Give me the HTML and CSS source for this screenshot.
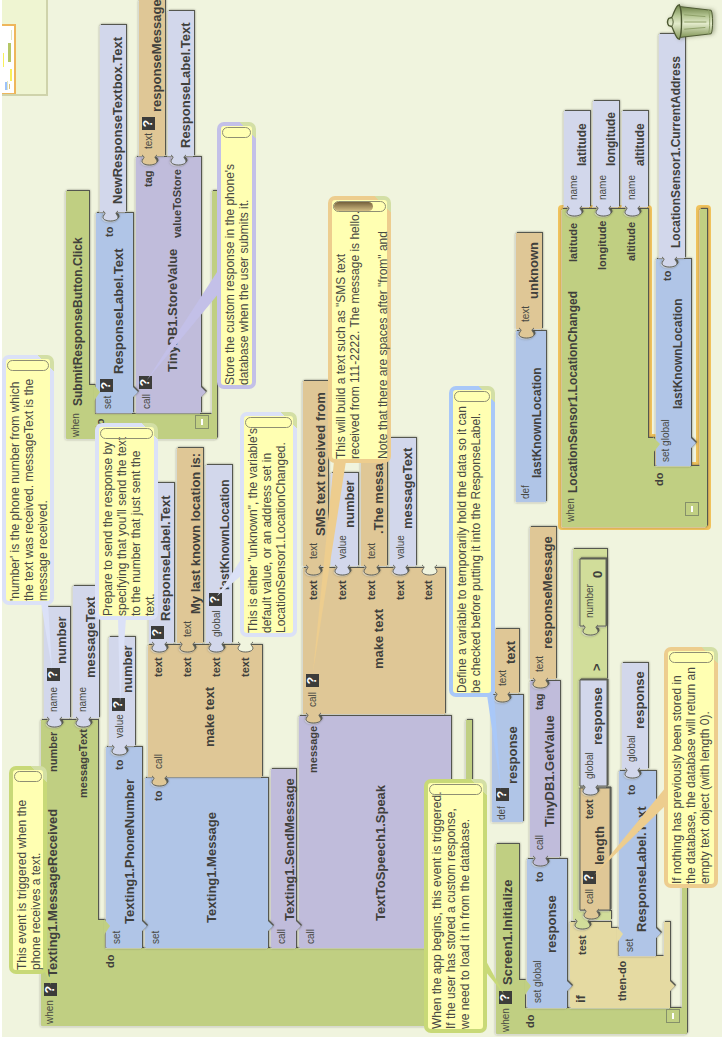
FILE: index.html
```html
<!DOCTYPE html>
<html lang="en">
<head>
<meta charset="utf-8">
<title>Blocks editor</title>
<link rel="stylesheet" href="styles.css">
</head>
<body>
<main class="workspace">
  <svg class="blocks" width="1037" height="722" viewBox="0 0 1037 722">
    <defs>
      <path id="plug" class="plug" d="M1 4C-1 7-2 6-3 5C-7 2-9 7-9 11.500S-7 21-3 18C-2 17-1 16 1 19"/>
    </defs>

    <!-- SubmitResponseButton.Click -->
    <g class="shape event"><path d="M599 66H846V89H652V95H650L645 99L640 95H623V212H846V217H599L598 216V67Z"/></g>
    <g class="shape proc"><path d="M625 136H880V201H650L645 206L640 201H624V137Z"/></g>
    <g class="shape var"><path d="M625 96H824V133H650L645 138L640 133H624V97Z"/></g>
    <path class="event" d="M636 94H652L645 100Z"/>
    <g class="shape value"><path d="M825 100H1012V126H825Z"/><use href="#plug" x="825" y="99"/></g>
    <g class="shape string"><path d="M881 139H1037V165H881Z"/><use href="#plug" x="881" y="138"/></g>
    <g class="shape value"><path d="M881 168H1026V194H881Z"/><use href="#plug" x="881" y="167"/></g>
    <text class="kind" x="600" y="79">when</text><text class="name compact" x="631" y="82">SubmitResponseButton.Click</text>
    <text class="slot" x="605" y="104">do</text>
    <text class="kind" x="628" y="111">set</text><text class="name" x="663" y="123">ResponseLabel.Text</text><text class="slot" x="800" y="113">to</text>
    <text class="name" x="833" y="122">NewResponseTextbox.Text</text>
    <text class="kind" x="628" y="150">call</text><text class="name" x="665" y="177">TinyDB1.StoreValue</text>
    <text class="slot" x="850" y="152">tag</text><text class="slot" x="799" y="181">valueToStore</text>
    <text class="kind" x="888" y="152">text</text><text class="name" x="925" y="161">responseMessage</text>
    <text class="name" x="889" y="190">ResponseLabel.Text</text>

    <!-- Texting1.MessageReceived -->
    <g class="shape event"><path d="M12 41H317V98H117V105H89V466H317V472H12L11 471V42Z"/></g>
    <g class="shape proc"><path d="M90 299H321V451H89V300Z"/></g>
    <g class="shape proc"><path d="M90 271H268V296H116L111 301L106 296H89V272Z"/></g>
    <g class="shape var"><path d="M90 145H259V268H116L111 273L106 268H89V146Z"/></g>
    <g class="shape var"><path d="M90 106H290V142H116L111 147L106 142H89V107Z"/></g>
    <path class="event" d="M102 104H118L111 110Z"/>
    <g class="shape value"><path d="M319 44H430V70H319Z"/><use href="#plug" x="319" y="43"/></g>
    <g class="shape value"><path d="M319 73H451V99H319Z"/><use href="#plug" x="319" y="72"/></g>
    <g class="shape value"><path d="M291 109H400V135H291Z"/><use href="#plug" x="291" y="108"/></g>
    <g class="shape string"><path d="M260 148H392V262H260Z"/><use href="#plug" x="260" y="148"/></g>
    <g class="shape value"><path d="M394 149H554V174H394Z"/><use href="#plug" x="394" y="148"/></g>
    <g class="shape string"><path d="M394 177H589V203H394Z"/><use href="#plug" x="394" y="176"/></g>
    <g class="shape value"><path d="M394 206H572V232H394Z"/><use href="#plug" x="394" y="205"/></g>
    <g class="canvas"><use href="#plug" x="394" y="234"/></g>
    <g class="shape string"><path d="M323 303H469V445H323Z"/><use href="#plug" x="323" y="302"/></g>
    <g class="shape string"><path d="M471 303H656V328H471Z"/><use href="#plug" x="471" y="302"/></g>
    <g class="shape value"><path d="M471 331H564V358H471Z"/><use href="#plug" x="471" y="331"/></g>
    <g class="shape string"><path d="M471 361H620V387H471Z"/><use href="#plug" x="471" y="360"/></g>
    <g class="shape value"><path d="M471 390H599V416H471Z"/><use href="#plug" x="471" y="389"/></g>
    <g class="canvas"><use href="#plug" x="471" y="418"/></g>
    <text class="kind" x="13" y="53">when</text><text class="name" x="60" y="57">Texting1.MessageReceived</text>
    <text class="slot" x="265" y="57">number</text><text class="slot" x="239" y="87">messageText</text><text class="slot" x="69" y="114">do</text>
    <text class="kind" x="325" y="57">name</text><text class="name" x="373" y="66">number</text>
    <text class="kind" x="325" y="86">name</text><text class="name" x="359" y="95">messageText</text>
    <text class="kind" x="93" y="120">set</text><text class="name" x="113" y="134">Texting1.PhoneNumber</text><text class="slot" x="267" y="123">to</text>
    <text class="kind" x="299" y="123">value</text><text class="name" x="344" y="132">number</text>
    <text class="kind" x="93" y="159">set</text><text class="name" x="114" y="216">Texting1.Message</text><text class="slot" x="236" y="162">to</text>
    <text class="kind" x="268" y="162">call</text><text class="name" x="290" y="214">make text</text>
    <text class="slot" x="360" y="162">text</text><text class="slot" x="360" y="191">text</text><text class="slot" x="360" y="220">text</text><text class="slot" x="360" y="249">text</text>
    <text class="name" x="416" y="170">ResponseLabel.Text</text>
    <text class="kind" x="400" y="191">text</text><text class="name" x="423" y="200">My last known location is:</text>
    <text class="kind" x="400" y="220">global</text><text class="name compact" x="447" y="229">lastKnownLocation</text>
    <text class="kind" x="93" y="285">call</text><text class="name" x="116" y="294">Texting1.SendMessage</text>
    <text class="kind" x="93" y="314">call</text><text class="name" x="116" y="385">TextToSpeech1.Speak</text><text class="slot" x="264" y="317">message</text>
    <text class="kind" x="330" y="316">call</text><text class="name" x="368" y="383">make text</text>
    <text class="slot" x="437" y="317">text</text><text class="slot" x="437" y="346">text</text><text class="slot" x="437" y="375">text</text><text class="slot" x="437" y="404">text</text><text class="slot" x="437" y="432">text</text>
    <text class="kind" x="478" y="317">text</text><text class="name" x="501" y="325">SMS text received from</text>
    <text class="kind" x="478" y="346">value</text><text class="name" x="509" y="354">number</text>
    <text class="kind" x="478" y="375">text</text><text class="name" x="503" y="383">.The message is</text>
    <text class="kind" x="478" y="404">value</text><text class="name" x="508" y="412">messageText</text>

    <!-- variable definitions -->
    <g class="shape var"><path d="M215 492H342V523H215Z"/></g>
    <g class="shape string"><path d="M344 495H408V519H344Z"/><use href="#plug" x="344" y="491"/></g>
    <text class="kind" x="217" y="505">def</text><text class="name" x="253" y="517">response</text>
    <text class="kind" x="351" y="506">text</text><text class="name" x="373" y="515">text</text>
    <g class="shape var"><path d="M535 516H706V546H535Z"/></g>
    <g class="shape string"><path d="M708 516H804V542H708Z"/><use href="#plug" x="708" y="515"/></g>
    <text class="kind" x="538" y="529">def</text><text class="name compact" x="559" y="541">lastKnownLocation</text>
    <text class="kind" x="715" y="529">text</text><text class="name" x="738" y="538">unknown</text>

    <!-- Screen1.Initialize -->
    <g class="shape event"><path d="M4 496H193V519H57V525H29V682H193V687H4L3 686V497Z"/></g>
    <g class="shape test"><path d="M30 570H115V611H109V618H81V664H115V670H56L51 675L46 670H29V571Z"/></g>
    <g class="shape var"><path d="M30 527H178V567H56L51 572L46 567H29V528Z"/></g>
    <path class="event" d="M42 525H58L51 531Z"/>
    <g class="shape proc"><path d="M180 530H356V560H180Z"/><use href="#plug" x="180" y="529"/></g>
    <g class="shape string"><path d="M358 530H510V556H358Z"/><use href="#plug" x="358" y="529"/></g>
    <g class="shape logic"><path d="M117 573H488V607H358V580H126V611H117Z"/><use href="#plug" x="117" y="571"/></g>
    <g class="shape string"><path class="inset" d="M127 580H249V610H127Z"/><use href="#plug" x="127" y="580"/></g>
    <g class="shape value"><path class="inset" d="M251 580H357V607H251Z"/><use href="#plug" x="251" y="579"/></g>
    <g class="shape logic"><path class="inset" d="M411 580H478V606H411Z"/><use href="#plug" x="411" y="579"/></g>
    <g class="shape var"><path d="M82 619H266V656H109L104 661L99 656H81V620Z"/></g>
    <path class="test" d="M94 617H110L103 623Z"/>
    <g class="shape value"><path d="M268 622H374V648H268Z"/><use href="#plug" x="268" y="621"/></g>
    <text class="kind" x="5" y="509">when</text><text class="name" x="52" y="512">Screen1.Initialize</text><text class="slot" x="9" y="534">do</text>
    <text class="kind" x="34" y="541">set global</text><text class="name" x="84" y="556">response</text><text class="slot" x="155" y="543">to</text>
    <text class="kind" x="187" y="543">call</text><text class="name" x="210" y="554">TinyDB1.GetValue</text><text class="slot" x="327" y="543">tag</text>
    <text class="kind" x="365" y="543">text</text><text class="name" x="388" y="552">responseMessage</text>
    <text class="name" x="34" y="585">if</text><text class="slot" x="82" y="586">test</text><text class="slot" x="36" y="626">then-do</text>
    <text class="kind" x="133" y="593">call</text><text class="name" x="172" y="604">length</text><text class="slot" x="218" y="593">text</text>
    <text class="kind" x="258" y="593">global</text><text class="name" x="292" y="602">response</text>
    <text class="name" x="366" y="601">&gt;</text><text class="kind" x="419" y="593">number</text><text class="name" x="459" y="602">0</text>
    <text class="kind" x="85" y="633">set</text><text class="name" x="105" y="646">ResponseLabel.Text</text><text class="slot" x="242" y="635">to</text>
    <text class="kind" x="275" y="635">global</text><text class="name" x="308" y="644">response</text>

    <!-- LocationSensor1.LocationChanged, selected -->
    <path class="halo" d="M511 562H828V648H599V654H571V700H828V707H511Z"/>
    <g class="shape event"><path d="M511 562H828V648H599V654H571V700H828V707H511L510 706V563Z"/></g>
    <g class="shape var"><path d="M572 656H778V691H599L594 696L589 691H571V657Z"/></g>
    <path class="event" d="M584 653H600L593 660Z"/>
    <g class="shape value"><path d="M830 564H926V590H830Z"/><use href="#plug" x="830" y="563"/></g>
    <g class="shape value"><path d="M830 593H936V619H830Z"/><use href="#plug" x="830" y="592"/></g>
    <g class="shape value"><path d="M830 622H926V648H830Z"/><use href="#plug" x="830" y="621"/></g>
    <g class="shape value"><path d="M779 659H1003V685H779Z"/><use href="#plug" x="779" y="658"/></g>
    <text class="kind" x="515" y="574">when</text><text class="name compact" x="544" y="577">LocationSensor1.LocationChanged</text>
    <text class="slot" x="775" y="577">latitude</text><text class="slot" x="767" y="606">longitude</text><text class="slot" x="776" y="635">altitude</text>
    <text class="slot" x="551" y="663">do</text><text class="kind" x="575" y="669">set global</text><text class="name compact" x="628" y="682">lastKnownLocation</text><text class="slot" x="756" y="671">to</text>
    <text class="kind" x="837" y="577">name</text><text class="name compact" x="871" y="586">latitude</text>
    <text class="kind" x="837" y="606">name</text><text class="name compact" x="871" y="615">longitude</text>
    <text class="kind" x="837" y="635">name</text><text class="name compact" x="871" y="644">altitude</text>
    <text class="name compact" x="789" y="680">LocationSensor1.CurrentAddress</text>
  </svg>

  <button class="help h1">?</button><button class="help h2">?</button><button class="help h3">?</button>
  <button class="help h4">?</button><button class="help h5">?</button><button class="help h6">?</button>
  <button class="help h7">?</button><button class="help h8">?</button><button class="help h9">?</button>
  <button class="help h10">?</button><button class="help h11">?</button><button class="help h12">?</button>
  <button class="fold f1" aria-label="Collapse SubmitResponseButton.Click"></button>
  <button class="fold f2" aria-label="Collapse Screen1.Initialize"></button>
  <button class="fold f3" aria-label="Collapse LocationSensor1.LocationChanged"></button>

  <svg class="tails" width="1037" height="722" viewBox="0 0 1037 722">
    <path class="t-value" d="M434 41L368 52L434 48Z"/>
    <path class="t-value" d="M419 118L334 120L419 126Z"/>
    <path class="t-value" d="M479 242L441 217L462 242Z"/>
    <path class="t-proc" d="M768 219L657 147L744 219Z"/>
    <path class="t-string" d="M576 334L365 313L576 346Z"/>
    <path class="t-var" d="M342 487L247 501L342 494Z"/>
    <path class="t-event" d="M78 485L43 504L66 485Z"/>
    <path class="t-event" d="M65 45L52 51L72 46Z"/>
    <path class="t-string" d="M250 666L162 594L232 666Z"/>
  </svg>

  <aside class="note n1">'number' is the phone number from which<br>the text was received. messageText is the<br>message received.<i class="scroll"></i></aside>
  <aside class="note n2">Prepare to send the response by<br>specifying that you'll send the text<br>to the number that just sent the<br>text.<i class="scroll"></i></aside>
  <aside class="note n3">Store the custom response in the phone's<br>database when the user submits it.<i class="scroll"></i></aside>
  <aside class="note n4">This is either "unknown", the variable's<br>default value, or an address set in<br>LocationSensor1.LocationChanged.<i class="scroll"></i></aside>
  <aside class="note n5">This will build a text such as "SMS text<br>received from 111-2222. The message is hello.<br><br>Note that there are spaces after "from" and<i class="scroll active"></i></aside>
  <aside class="note n6">Define a variable to temporarily hold the data so it can<br>be checked before putting it into the ResponseLabel.<i class="scroll"></i></aside>
  <aside class="note n7">When the app begins, this event is triggered.<br>If the user has stored a custom response,<br>we need to load it in from the database.<i class="scroll"></i></aside>
  <aside class="note n8">This event is triggered when the<br>phone receives a text.<i class="scroll"></i></aside>
  <aside class="note n9">If nothing has previously been stored in<br>the database, the database will return an<br>empty text object (with length 0).<i class="scroll"></i></aside>

  <div class="overview">
    <svg width="70" height="14" viewBox="0 0 70 14">
      <rect x="0" y="-3" width="69" height="16" fill="#fff" stroke="#eeb65c" stroke-width="2"/>
      <path d="M4 3h8v2H4z" fill="#9cc2fb"/><path d="M5 7h5v1H5z" fill="#dcc07c"/>
      <path d="M13 8h12v2H13zM27 1h14v1H27z" fill="#f8f05a"/><path d="M32 6h19v3H32z" fill="#b5c766"/>
      <path d="M4 5h9v1H4zM54 9h10v1H54z" fill="#e2e6bd"/>
    </svg>
  </div>

  <button class="trash" aria-label="Trash">
    <svg width="38" height="50" viewBox="0 0 42 52" preserveAspectRatio="none">
      <defs><linearGradient id="can"><stop offset="0" stop-color="#84985a"/><stop offset=".45" stop-color="#e3ebcb"/><stop offset=".7" stop-color="#b5c693"/><stop offset="1" stop-color="#6f8349"/></linearGradient></defs>
      <path d="M4 16L8 48C12 50 30 50 34 48L38 16Z" fill="url(#can)" stroke="#4b5730"/>
      <path d="M7 45C13 47 29 47 35 45M13 20L15 42M21 20V43M29 20L27 42" fill="none" stroke="#8c9e66"/>
      <path d="M2 15C2 11 13 9 16 7L17 4C19 2 23 2 25 4L26 7C29 9 40 11 40 15C33 18 9 18 2 15Z" fill="url(#can)" stroke="#4b5730" stroke-width="1.500"/>
      <path d="M16 7C19 9 23 9 26 7" fill="none" stroke="#4b5730"/>
    </svg>
  </button>
</main>
</body>
</html>
```
FILE: styles.css
```css
* { box-sizing: border-box; }

body {
  margin: 0;
  overflow: hidden;
  background: #f0f4de;
  font-family: "Liberation Sans", Arial, sans-serif;
}

/* The workspace is turned a quarter so its long side runs up the window. */
.workspace {
  position: absolute;
  top: 0;
  left: 0;
  width: 100vh;
  height: 100vw;
  border-top: 2px solid #fff;
  transform-origin: 0 0;
  transform: translateY(100vh) rotate(-90deg);
}

.blocks, .tails { position: absolute; top: -2px; left: 0; }
.tails { pointer-events: none; }

.shape {
  filter: drop-shadow(-1px -1px 0 rgba(255, 255, 255, .4)) drop-shadow(1px 1px 0 #55574f) drop-shadow(0 0 1px rgba(60, 60, 50, .6));
}
.plug { stroke: #63645c; stroke-width: 1px; }
.inset { stroke: #63645c; stroke-width: 1px; }
.event { fill: #c0cf82; }
.var { fill: #b0c5e7; }
.value { fill: #d2d7eb; }
.string { fill: #dfc796; }
.proc { fill: #c0bcdb; }
.test { fill: #e5daa2; }
.logic { fill: #d1dd9a; }
.canvas { fill: #f0f4de; }
.halo { fill: none; stroke: #f0c25c; stroke-width: 8px; stroke-linejoin: round; }

.kind { font-size: 10px; fill: #484943; }
.slot { font-size: 11px; font-weight: bold; fill: #40403c; }
.name { font-size: 13px; font-weight: bold; fill: #40403c; }
.compact { font-size: 12px; }

.help {
  position: absolute;
  width: 13px;
  height: 13px;
  padding: 0;
  border: 0;
  background: #3c3c3a;
  color: #fff;
  font: bold 12px/13px "Liberation Sans", Arial, sans-serif;
}
.h1 { left: 645px; top: 98px; }
.h2 { left: 648px; top: 137px; }
.h3 { left: 907px; top: 140px; }
.h4 { left: 41px; top: 42px; }
.h5 { left: 356px; top: 45px; }
.h6 { left: 326px; top: 110px; }
.h7 { left: 398px; top: 149px; }
.h8 { left: 431px; top: 207px; }
.h9 { left: 350px; top: 304px; }
.h10 { left: 236px; top: 494px; }
.h11 { left: 33px; top: 497px; }
.h12 { left: 153px; top: 581px; }

.fold {
  position: absolute;
  width: 14px;
  height: 14px;
  padding: 0;
  border: 1px solid #85906a;
  background: linear-gradient(#fff, #fff) center / 6px 2px no-repeat;
}
.f1 { left: 608px; top: 193px; }
.f2 { left: 14px; top: 664px; }
.f3 { left: 521px; top: 683px; }

.t-value { fill: #dbe1f7; }
.t-proc { fill: #c3c0e8; }
.t-string { fill: #edcd8e; }
.t-var { fill: #a9c8f8; }
.t-event { fill: #c8d977; }

.note {
  --edge: #dbe1f7;
  position: absolute;
  padding: 2px 0;
  border: 4px solid transparent;
  border-radius: 7px;
  background:
    linear-gradient(#ffffb2, #ffffb2) padding-box,
    linear-gradient(315deg, #d3dfa5 12px, var(--edge) 12px) border-box;
  color: #484943;
  font-size: 12px;
  line-height: 14px;
  white-space: nowrap;
}
.n1 { left: 432px; top: 0; width: 250px; height: 52px; }
.n2 { left: 417px; top: 93px; width: 197px; height: 63px; }
.n3 { left: 648px; top: 215px; width: 267px; height: 39px; --edge: #c3c0e8; }
.n4 { left: 400px; top: 238px; width: 225px; height: 57px; }
.n5 { left: 574px; top: 326px; width: 267px; height: 63px; --edge: #edcd8e; }
.n6 { left: 340px; top: 447px; width: 311px; height: 46px; --edge: #a9c8f8; }
.n7 { left: 4px; top: 422px; width: 254px; height: 63px; --edge: #c8d977; }
.n8 { left: 63px; top: 7px; width: 208px; height: 38px; --edge: #c8d977; }
.n9 { left: 149px; top: 662px; width: 241px; height: 54px; --edge: #edcd8e; }

.scroll {
  position: absolute;
  top: 1px;
  right: 1px;
  bottom: 1px;
  width: 11px;
  border: 1px solid #8f8f74;
  border-radius: 6px;
}
.active::before {
  content: "";
  display: block;
  height: 39px;
  border-radius: 5px;
  background: linear-gradient(90deg, #d2bd84, #75613c);
}

.overview {
  position: absolute;
  top: 0;
  right: 0;
  width: 96px;
  height: 46px;
  border: 2px solid #cfd3ab;
  border-width: 0 0 2px 2px;
  background: #eff5d2;
}
.overview svg { display: block; overflow: hidden; }

.trash {
  position: absolute;
  right: 3px;
  bottom: 7px;
  padding: 0;
  border: 0;
  background: none;
  filter: drop-shadow(0 2px 2px rgba(60, 70, 30, .4));
}
.trash svg { display: block; }
```
